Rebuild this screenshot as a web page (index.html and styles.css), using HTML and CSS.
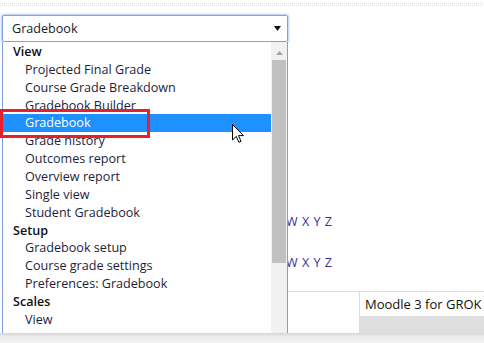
FILE: index.html
```html
<!DOCTYPE html>
<html>
<head>
<meta charset="utf-8">
<link rel="stylesheet" href="styles.css">
</head>
<body>
<div class="page">
  <div class="dots"></div>
  <div class="select">
    <span class="select-text">Gradebook</span>
    <svg class="select-arrow" width="7" height="5" viewBox="0 0 7 5"><path d="M0 0H7L3.5 5Z" fill="#111"/></svg>
  </div>
  <div class="content">
    <div class="alpha alpha-1">W X Y Z</div>
    <div class="alpha alpha-2">W X Y Z</div>
    <div class="table">
      <div class="cell-empty"></div>
      <div class="cell-course">
        <div class="course-name">Moodle 3 for GROK <span class="course-icon"></span></div>
        <div class="course-bar"></div>
      </div>
    </div>
  </div>

  <div class="listbox">
    <ul class="options">
      <li class="group">View</li>
      <li class="opt">Projected Final Grade</li>
      <li class="opt">Course Grade Breakdown</li>
      <li class="opt">Gradebook Builder</li>
      <li class="opt selected">Gradebook</li>
      <li class="opt">Grade history</li>
      <li class="opt">Outcomes report</li>
      <li class="opt">Overview report</li>
      <li class="opt">Single view</li>
      <li class="opt">Student Gradebook</li>
      <li class="group">Setup</li>
      <li class="opt">Gradebook setup</li>
      <li class="opt">Course grade settings</li>
      <li class="opt">Preferences: Gradebook</li>
      <li class="group">Scales</li>
      <li class="opt">View</li>
      <li class="group">Letters</li>
    </ul>
    <div class="scrollbar">
      <svg class="scroll-up" width="7" height="4" viewBox="0 0 7 4"><path d="M0 4H7L3.5 0Z" fill="#a3a3a3"/></svg>
      <div class="thumb"></div>
    </div>
  </div>

  <div class="highlight-box"></div>

  <svg class="cursor" width="13" height="20" viewBox="0 0 13 20">
    <path d="M0.5 0.5 L0.5 16 L4.3 12.4 L6.8 18.3 L9 17.3 L6.5 11.6 L11.5 11.6 Z" fill="#fff" stroke="#000" stroke-width="1" stroke-linejoin="miter"/>
  </svg>
</div>
<div class="shadow"></div>
</body>
</html>
```

FILE: styles.css
```css
html, body {
  margin: 0;
  padding: 0;
}
body {
  width: 484px;
  height: 343px;
  overflow: hidden;
  background: #fff;
  font-family: "Open Sans", "Noto Sans", sans-serif;
  color: #1f1f2e;
}
.page {
  position: relative;
  height: 333px;
  overflow: hidden;
}
.dots {
  margin-top: 3px;
  height: 4px;
  background:
    linear-gradient(90deg, transparent 50%, #fff 50%) 0 0 / 2px 2px,
    linear-gradient(#e2e2e2 50%, #fff 50%) 0 0 / 2px 2px;
}
.select {
  margin: 8px 0 0 2px;
  height: 25px;
  border: 1px solid #7fa1e2;
  border-radius: 2px;
  box-shadow: 0 0 2px 1px #b5c9f0;
  display: flex;
  align-items: center;
  justify-content: space-between;
  padding: 0 6px 0 9px;
  box-sizing: content-box;
  width: 269px;
}
.select-text {
  font-size: 12.6px;
  color: #1b1b1b;
}
.select-arrow {
  display: block;
}
.content {
  padding-left: 286px;
}
.alpha {
  font-size: 12.6px;
  color: #3a2f8e;
  white-space: nowrap;
  height: 18px;
  line-height: 18px;
  word-spacing: 1px;
}
.alpha-1 {
  margin-top: 171px;
}
.alpha-2 {
  margin-top: 23px;
}
.table {
  margin-top: 19px;
  border-top: 1px solid #dcdcdc;
  display: flex;
  height: 60px;
}
.cell-empty {
  width: 73px;
  flex-shrink: 0;
  border-right: 1px solid #dcdcdc;
}
.cell-course {
  flex: 1;
  min-width: 0;
  display: flex;
  flex-direction: column;
}
.course-name {
  height: 24px;
  line-height: 25px;
  padding-left: 5px;
  font-size: 13px;
  color: #111;
  white-space: nowrap;
  overflow: hidden;
}
.course-icon {
  display: inline-block;
  width: 8px;
  height: 8px;
  border: 1px solid #4b2f8f;
  vertical-align: -2px;
}
.course-bar {
  flex: 1;
  background: #dedede;
}
.listbox {
  position: absolute;
  left: 2px;
  top: 42px;
  width: 284px;
  height: 310px;
  background: #fff;
  border-left: 1px solid #7f9fd8;
  border-right: 1px solid #7f9fd8;
  display: flex;
}
.options {
  list-style: none;
  margin: 0;
  padding: 1px 0 0 0;
  flex: 1;
  font-size: 12.6px;
}
.options li {
  height: 17.86px;
  line-height: 17.86px;
  white-space: nowrap;
  color: #1e1e3a;
}
.group {
  padding-left: 10px;
  font-weight: 600;
  color: #111 !important;
}
.opt {
  padding-left: 22px;
}
.opt.selected {
  background: #1e90ff;
  color: #fff !important;
}
.scrollbar {
  width: 16px;
  background: #f1f1f1;
  display: flex;
  flex-direction: column;
  align-items: center;
}
.scroll-up {
  margin-top: 9px;
  display: block;
}
.thumb {
  margin-top: 5px;
  width: 14px;
  height: 203px;
  background: #c1c1c1;
}
.highlight-box {
  position: absolute;
  left: 0;
  top: 109px;
  width: 144px;
  height: 23px;
  border: 3px solid #e8202a;
}
.cursor {
  position: absolute;
  left: 232px;
  top: 124px;
}
.shadow {
  height: 10px;
  background: linear-gradient(#d6d6d6, #ececec 40%, #f3f3f3);
}
```
